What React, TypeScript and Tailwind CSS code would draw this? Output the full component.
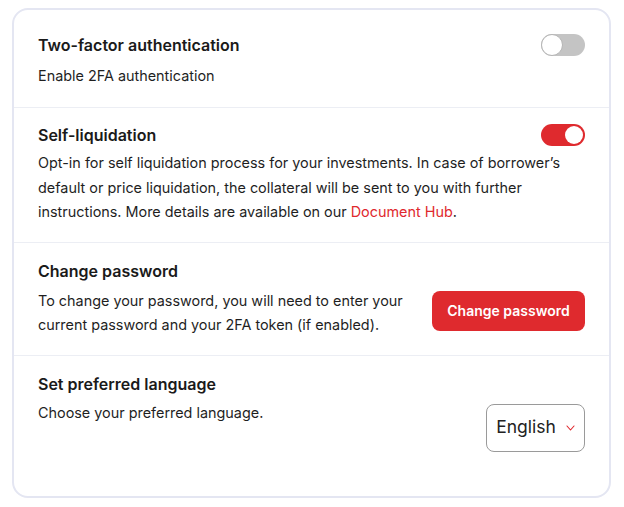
import React from "react";

function Toggle({ on }: { on: boolean }) {
  return on ? (
    <div className="w-[44px] h-[22px] rounded-full bg-[#df2a2e] flex items-center justify-end p-[2px]">
      <div className="w-[18px] h-[18px] rounded-full bg-white" />
    </div>
  ) : (
    <div className="w-[44px] h-[22px] rounded-full bg-[#c4c4c4] flex items-center justify-start">
      <div className="w-[22px] h-[22px] rounded-full bg-white border border-[#b5b5b5]" />
    </div>
  );
}

export default function App() {
  return (
    <div className="w-[624px] h-[507px] bg-white p-[12px] pt-[8px] font-['Inter',sans-serif] text-[#1f1f1f]">
      <div className="w-[599px] h-[490px] rounded-[16px] border-2 border-[#e4e6f2] bg-white flex flex-col">
        <section className="px-[24px] pt-[23px] pb-[19px] border-b border-[#eceef4]">
          <div className="flex items-center justify-between">
            <h2 className="text-[16px] leading-[24px] font-semibold text-[#1a1a1a]">Two-factor authentication</h2>
            <Toggle on={false} />
          </div>
          <p className="mt-[7px] text-[14.4px] leading-[24px]">Enable 2FA authentication</p>
        </section>

        <section className="px-[24px] pt-[15px] pb-[17px] border-b border-[#eceef4]">
          <div className="flex items-center justify-between">
            <h2 className="text-[16px] leading-[24px] font-semibold text-[#1a1a1a]">Self-liquidation</h2>
            <Toggle on={true} />
          </div>
          <p className="mt-[4px] text-[14.4px] leading-[24.5px] whitespace-nowrap">
            Opt-in for self liquidation process for your investments. In case of borrower’s
            <br />
            default or price liquidation, the collateral will be sent to you with further
            <br />
            instructions. More details are available on our{" "}
            <a className="text-[#e0282e]">Document Hub</a>.
          </p>
        </section>

        <section className="px-[24px] pt-[16px] pb-[18px] border-b border-[#eceef4]">
          <h2 className="text-[16px] leading-[24px] font-semibold text-[#1a1a1a]">Change password</h2>
          <div className="mt-[6px] flex items-center justify-between">
            <p className="text-[14.4px] leading-[24px] whitespace-nowrap">
              To change your password, you will need to enter your
              <br />
              current password and your 2FA token (if enabled).
            </p>
            <button className="w-[153px] h-[40px] rounded-[8px] bg-[#df2a2e] text-white text-[14px] font-semibold mb-[4px]">
              Change password
            </button>
          </div>
        </section>

        <section className="px-[24px] pt-[16px]">
          <h2 className="text-[16px] leading-[24px] font-semibold text-[#1a1a1a]">Set preferred language</h2>
          <div className="mt-[5px] flex items-start justify-between">
            <p className="text-[14.4px] leading-[24px]">Choose your preferred language.</p>
            <div className="mt-[3px] w-[99px] h-[48px] rounded-[8px] border border-[#9a9a9a] flex items-center justify-center gap-[10px]">
              <span className="text-[17.5px] text-[#222]">English</span>
              <svg width="9" height="6" viewBox="0 0 9 6" fill="none">
                <path d="M1 1l3.5 4L8 1" stroke="#e0282e" strokeWidth="1.1" strokeLinecap="round" strokeLinejoin="round" />
              </svg>
            </div>
          </div>
        </section>
      </div>
    </div>
  );
}
